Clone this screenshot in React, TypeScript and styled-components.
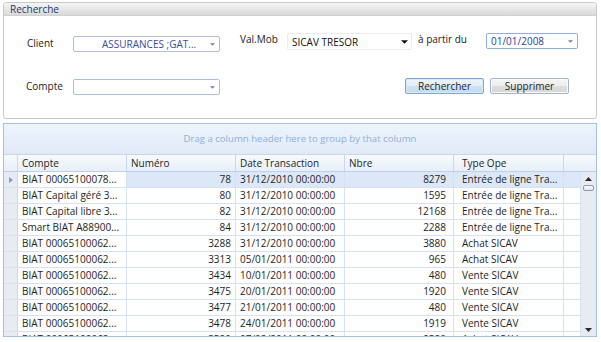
import * as React from 'react';
import styled, { createGlobalStyle, css } from 'styled-components';

const GlobalStyle = createGlobalStyle`
	html, body {
		margin: 0;
		padding: 0;
		background: #ffffff;
	}
	body {
		font-family: "Open Sans", "Noto Sans", "DejaVu Sans", sans-serif;
		font-size: 10px;
		color: #1e1e1e;
	}
`;

type ComboKind = 'blue' | 'plain' | 'date';

interface IRow {
	compte: string;
	numero: string;
	date: string;
	nbre: string;
	type: string;
}

const ROWS: IRow[] = [
	{ compte: 'BIAT 00065100078...', numero: '78', date: '31/12/2010 00:00:00', nbre: '8279', type: 'Entrée de ligne Tra...' },
	{ compte: 'BIAT Capital géré 3...', numero: '80', date: '31/12/2010 00:00:00', nbre: '1595', type: 'Entrée de ligne Tra...' },
	{ compte: 'BIAT Capital libre 3...', numero: '82', date: '31/12/2010 00:00:00', nbre: '12168', type: 'Entrée de ligne Tra...' },
	{ compte: 'Smart BIAT A88900...', numero: '84', date: '31/12/2010 00:00:00', nbre: '2288', type: 'Entrée de ligne Tra...' },
	{ compte: 'BIAT 00065100062...', numero: '3288', date: '31/12/2010 00:00:00', nbre: '3880', type: 'Achat SICAV' },
	{ compte: 'BIAT 00065100062...', numero: '3313', date: '05/01/2011 00:00:00', nbre: '965', type: 'Achat SICAV' },
	{ compte: 'BIAT 00065100062...', numero: '3434', date: '10/01/2011 00:00:00', nbre: '480', type: 'Vente SICAV' },
	{ compte: 'BIAT 00065100062...', numero: '3475', date: '20/01/2011 00:00:00', nbre: '1920', type: 'Vente SICAV' },
	{ compte: 'BIAT 00065100062...', numero: '3477', date: '21/01/2011 00:00:00', nbre: '480', type: 'Vente SICAV' },
	{ compte: 'BIAT 00065100062...', numero: '3478', date: '24/01/2011 00:00:00', nbre: '1919', type: 'Vente SICAV' },
	{ compte: 'BIAT 00065100062...', numero: '3520', date: '07/02/2011 00:00:00', nbre: '9580', type: 'Achat SICAV' },
];

const Arrow: React.FC<{ dark?: boolean }> = ({ dark }) => (
	<svg width={dark ? 7 : 5} height={dark ? 4 : 3} viewBox="0 0 6 3">
		<path d="M0 0 L6 0 L3 3 Z" fill={dark ? '#111111' : '#6f82a6'} />
	</svg>
);

const ComboBox: React.FC<{ kind: ComboKind; width: number; top: number; text?: string }> = ({ kind, width, top, text }) => (
	<Combo $kind={kind} $w={width} $top={top}>
		<ComboText $kind={kind}>{text}</ComboText>
		<ComboArrow>
			<Arrow dark={kind === 'plain'} />
		</ComboArrow>
	</Combo>
);

const App: React.FunctionComponent = () => {
	return (
		<Page>
			<GlobalStyle />
			<GroupBox>
				<GroupHeader>Recherche</GroupHeader>
				<GroupBody>
					<FormRow $mt={15}>
						<Label $w={46} $top={4}>Client</Label>
						<ComboBox kind="blue" width={147} top={5} text="ASSURANCES ;GAT..." />
						<Label $w={47} $top={0} $ml={20}>Val.Mob</Label>
						<ComboBox kind="plain" width={125} top={2} text="SICAV TRESOR" />
						<Label $w={68} $top={0} $ml={6}>à partir du</Label>
						<ComboBox kind="date" width={92} top={2} text="01/01/2008" />
					</FormRow>
					<FormRow $mt={25}>
						<Label $w={47} $top={0} $ml={-1}>Compte</Label>
						<ComboBox kind="blue" width={147} top={1} />
						<Buttons>
							<Button $primary>Rechercher</Button>
							<Button>Supprimer</Button>
						</Buttons>
					</FormRow>
				</GroupBody>
			</GroupBox>

			<GridPanel>
				<GroupPanel>Drag a column header here to group by that column</GroupPanel>
				<HeaderRow>
					<HeaderCell />
					<HeaderCell>Compte</HeaderCell>
					<HeaderCell>Numéro</HeaderCell>
					<HeaderCell>Date Transaction</HeaderCell>
					<HeaderCell>Nbre</HeaderCell>
					<HeaderCell $pl={8}>Type Ope</HeaderCell>
					<HeaderCell $last />
				</HeaderRow>
				<GridBody>
					<RowsArea>
						{ROWS.map((r, i) => {
							const sel = i === 0;
							return (
								<DataRow key={i}>
									<Indicator>
										{sel && (
											<svg width="4" height="6" viewBox="0 0 4 6">
												<path d="M0 0 L4 3 L0 6 Z" fill="#7c9ccc" />
											</svg>
										)}
									</Indicator>
									<Cell>{r.compte}</Cell>
									<Cell $right $sel={sel}>{r.numero}</Cell>
									<Cell $sel={sel}>{r.date}</Cell>
									<Cell $right $pr={7} $sel={sel}>{r.nbre}</Cell>
									<Cell $pl={8} $sel={sel}>{r.type}</Cell>
									<Cell $sel={sel} />
								</DataRow>
							);
						})}
					</RowsArea>
					<ScrollBar>
						<ScrollArrow>
							<svg width="7" height="4" viewBox="0 0 7 4">
								<path d="M0 4 L3.5 0 L7 4 Z" fill="#2b2b2b" />
							</svg>
						</ScrollArrow>
						<Thumb />
						<ScrollSpacer />
						<ScrollArrow>
							<svg width="7" height="4" viewBox="0 0 7 4">
								<path d="M0 0 L7 0 L3.5 4 Z" fill="#2b2b2b" />
							</svg>
						</ScrollArrow>
					</ScrollBar>
				</GridBody>
			</GridPanel>
		</Page>
	);
};

export default App;

const Page = styled.div`
	width: 601px;
	height: 342px;
	overflow: hidden;
	box-sizing: border-box;
	padding: 2px 4px 0 3px;
	display: flex;
	flex-direction: column;
	gap: 4px;
`;

const GroupBox = styled.div`
	height: 117px;
	flex-shrink: 0;
	box-sizing: border-box;
	border: 1px solid #c9c9c9;
	border-radius: 3px;
	display: flex;
	flex-direction: column;
	overflow: hidden;
`;

const GroupHeader = styled.div`
	height: 12px;
	line-height: 12px;
	padding-left: 6px;
	background: linear-gradient(#f5f5f5, #d9d9d9);
	border-bottom: 1px solid #d0d0d0;
	color: #1d356b;
	font-size: 10px;
`;

const GroupBody = styled.div`
	flex: 1;
	display: flex;
	flex-direction: column;
	padding: 0 0 0 23px;
`;

const FormRow = styled.div<{ $mt: number }>`
	display: flex;
	align-items: flex-start;
	margin-top: ${p => p.$mt}px;
	height: 22px;
`;

const Label = styled.div<{ $w: number; $top: number; $ml?: number }>`
	width: ${p => p.$w}px;
	flex-shrink: 0;
	margin-top: ${p => p.$top}px;
	margin-left: ${p => p.$ml || 0}px;
	line-height: 16px;
	font-size: 10px;
	color: #222222;
	white-space: nowrap;
`;

const Combo = styled.div<{ $kind: ComboKind; $w: number; $top: number }>`
	width: ${p => p.$w}px;
	flex-shrink: 0;
	height: ${p => (p.$kind === 'plain' ? 17 : 16)}px;
	margin-top: ${p => p.$top}px;
	box-sizing: border-box;
	display: flex;
	align-items: center;
	background: #ffffff;
	border-radius: 2px;
	${p =>
		p.$kind === 'blue' &&
		css`
			border: 1px solid #a9c0e2;
		`}
	${p =>
		p.$kind === 'plain' &&
		css`
			border: 1px solid #ececec;
		`}
	${p =>
		p.$kind === 'date' &&
		css`
			border: 1px solid #8fb0dc;
		`}
`;

const ComboText = styled.div<{ $kind: ComboKind }>`
	flex: 1;
	white-space: nowrap;
	overflow: hidden;
	font-size: 10px;
	line-height: 14px;
	padding-left: ${p => (p.$kind === 'blue' ? 28 : 4)}px;
	color: ${p => (p.$kind === 'plain' ? '#111111' : p.$kind === 'date' ? '#2a449a' : '#3a4c9c')};
`;

const ComboArrow = styled.div`
	width: 14px;
	display: flex;
	justify-content: center;
	align-items: center;
`;

const Buttons = styled.div`
	margin-left: auto;
	margin-right: 27px;
	display: flex;
	gap: 6px;
`;

const Button = styled.button<{ $primary?: boolean }>`
	width: 79px;
	height: 16px;
	padding: 0;
	font-family: inherit;
	font-size: 10px;
	line-height: 14px;
	color: #1e1e1e;
	border-radius: 2px;
	border: 1px solid ${p => (p.$primary ? '#7ea7cf' : '#a6b4c4')};
	background: ${p =>
		p.$primary
			? 'linear-gradient(#eef5fb 0%, #e1edf8 50%, #cfe2f3 51%, #c2daef 100%)'
			: 'linear-gradient(#f6f6f6 0%, #ececec 50%, #dedede 51%, #d6d6d6 100%)'};
	box-shadow: inset 0 0 0 1px ${p => (p.$primary ? '#d8eaf8' : '#fafafa')};
`;

const GridPanel = styled.div`
	height: 214px;
	flex-shrink: 0;
	box-sizing: border-box;
	border: 1px solid #a3bfe4;
	display: flex;
	flex-direction: column;
	overflow: hidden;
`;

const GroupPanel = styled.div`
	height: 30px;
	line-height: 30px;
	text-align: center;
	font-size: 9.6px;
	color: #8fb0db;
	background: linear-gradient(#edf4fc, #e0eaf7);
`;

const COLS = '14px 109px 109px 109px 109px 110px';

const HeaderRow = styled.div`
	display: grid;
	grid-template-columns: ${COLS} 32px;
	height: 16px;
	border-top: 1px solid #c6d7ee;
	border-bottom: 1px solid #bcd0eb;
	background: linear-gradient(#f7fafd, #e8eff9);
`;

const HeaderCell = styled.div<{ $pl?: number; $last?: boolean }>`
	box-sizing: border-box;
	padding-left: ${p => p.$pl ?? 4}px;
	line-height: 16px;
	font-size: 10px;
	color: #1e1e1e;
	white-space: nowrap;
	overflow: hidden;
	border-right: ${p => (p.$last ? 'none' : '1px solid #c8d9ef')};
`;

const GridBody = styled.div`
	flex: 1;
	display: flex;
	min-height: 0;
`;

const RowsArea = styled.div`
	flex: 1;
	overflow: hidden;
	display: flex;
	flex-direction: column;
`;

const DataRow = styled.div`
	display: grid;
	grid-template-columns: ${COLS} 17px;
	height: 16px;
	flex-shrink: 0;
	box-sizing: border-box;
	border-bottom: 1px solid #d5e2f3;
`;

const textured = css`
	background-color: #f1f3f7;
	background-image: radial-gradient(#dde2ea 0.6px, transparent 0.8px);
	background-size: 2px 2px;
`;

const Indicator = styled.div`
	${textured};
	box-sizing: border-box;
	border-right: 1px solid #c8d9ef;
	display: flex;
	align-items: center;
	justify-content: center;
`;

const Cell = styled.div<{ $right?: boolean; $sel?: boolean; $pl?: number; $pr?: number }>`
	box-sizing: border-box;
	padding: 0 ${p => p.$pr ?? 4}px 0 ${p => p.$pl ?? 4}px;
	text-align: ${p => (p.$right ? 'right' : 'left')};
	line-height: 15px;
	font-size: 10px;
	color: #1e1e1e;
	white-space: nowrap;
	overflow: hidden;
	border-right: 1px solid #d5e2f3;
	background: ${p => (p.$sel ? '#dce8f8' : '#ffffff')};
`;

const ScrollBar = styled.div`
	width: 15px;
	${textured};
	display: flex;
	flex-direction: column;
	align-items: center;
	padding: 3px 0 2px;
	box-sizing: border-box;
`;

const ScrollArrow = styled.div`
	height: 8px;
	display: flex;
	align-items: center;
	justify-content: center;
`;

const Thumb = styled.div`
	width: 11px;
	height: 6px;
	margin-top: 2px;
	box-sizing: border-box;
	border: 1px solid #8d9aaa;
	border-radius: 2px;
	background: linear-gradient(#fbfbfb, #e2e6ec);
`;

const ScrollSpacer = styled.div`
	flex: 1;
`;
